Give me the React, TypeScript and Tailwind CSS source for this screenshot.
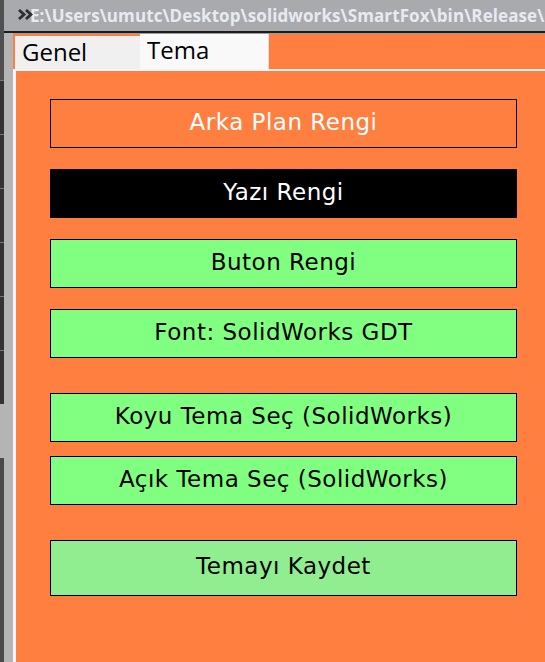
import React from "react";

const btnFont = { fontFamily: '"DejaVu Sans", Verdana, sans-serif' };

function Btn({
  label,
  cls,
}: {
  label: string;
  cls: string;
}) {
  return (
    <div
      className={`w-[467px] ml-[34px] flex items-center justify-center pb-[3px] text-[23px] tracking-[0.5px] ${cls}`}
      style={btnFont}
    >
      {label}
    </div>
  );
}

export default function App() {
  return (
    <div className="w-[545px] h-[662px] overflow-hidden flex bg-[#b4b4b4]">
      {/* left dark strip */}
      <div className="w-[4px] shrink-0 flex flex-col">
        <div className="h-[80px] bg-[#505050]" />
        <div className="h-[54px] border-t border-[#777777] bg-[#333333]" />
        <div className="h-[54px] border-t border-[#777777] bg-[#333333]" />
        <div className="h-[54px] border-t border-[#777777] bg-[#333333]" />
        <div className="h-[54px] border-t border-[#777777] bg-[#333333]" />
        <div className="h-[54px] border-t border-[#777777] bg-[#333333]" />
        <div className="h-[54px] border-t border-[#777777] bg-[#333333]" />
        <div className="h-[54px] bg-[#b4b4b4]" />
        <div className="flex-1 bg-[#4a4a4a]" />
      </div>

      <div className="flex-1 min-w-0 flex flex-col">
        {/* title bar */}
        <div className="h-[31px] shrink-0 bg-[#a9aaae] relative overflow-hidden whitespace-nowrap pl-[26px]">
          <span
            className="block text-[17px] tracking-[0.1px] font-bold leading-[31px] text-[#e7eaf1]"
            style={{ fontFamily: '"Open Sans", "Noto Sans", sans-serif' }}
          >
            E:\Users\umutc\Desktop\solidworks\SmartFox\bin\Release\F
          </span>
          <svg
            className="absolute left-[14px] top-[9px]"
            width="15"
            height="11"
            viewBox="0 0 15 11"
          >
            <polyline
              points="1,1 6,5.5 1,10"
              fill="none"
              stroke="#2e2e2e"
              strokeWidth="2.8"
            />
            <polyline
              points="8,1 13,5.5 8,10"
              fill="none"
              stroke="#2e2e2e"
              strokeWidth="2.8"
            />
          </svg>
        </div>
        <div className="h-[2px] shrink-0 bg-[#1c1c1c]" />

        <div className="flex-1 flex min-h-0">
          <div className="w-[9px] shrink-0 bg-[#b4b4b4]" />
          <div className="flex-1 min-w-0 flex flex-col">
            <div className="h-[1px] shrink-0 bg-[#9c9c9c]" />
            {/* tabs */}
            <div
              className="h-[35px] shrink-0 bg-[#ff7f40] flex items-end pl-[2px]"
              style={{ fontFamily: '"Open Sans", "Noto Sans", sans-serif' }}
            >
              <div className="w-[125px] h-[33px] bg-[#f0f0f0] pl-[7px] text-[24px] leading-[32px] text-black">
                Genel
              </div>
              <div className="w-[129px] h-[35px] bg-[#f9f9f9] border-r border-[#dcdcdc] pl-[7px] text-[24px] leading-[32px] text-black">
                Tema
              </div>
            </div>
            {/* tab page */}
            <div className="flex-1 border-t-2 border-l-[3px] border-[#f4f6f9] bg-[#ff7f40] pt-[28px] flex flex-col">
              <Btn
                label="Arka Plan Rengi"
                cls="h-[49px] border border-black bg-[#ff7f40] text-white"
              />
              <Btn
                label="Yazı Rengi"
                cls="h-[49px] mt-[21px] bg-black text-white"
              />
              <Btn
                label="Buton Rengi"
                cls="h-[49px] mt-[21px] border border-black bg-[#80ff80] text-black"
              />
              <Btn
                label="Font: SolidWorks GDT"
                cls="h-[49px] mt-[21px] border border-black bg-[#80ff80] text-black"
              />
              <Btn
                label="Koyu Tema Seç (SolidWorks)"
                cls="h-[49px] mt-[35px] border border-black bg-[#80ff80] text-black"
              />
              <Btn
                label="Açık Tema Seç (SolidWorks)"
                cls="h-[49px] mt-[14px] border border-black bg-[#80ff80] text-black"
              />
              <Btn
                label="Temayı Kaydet"
                cls="h-[56px] mt-[35px] border border-black bg-[#90ee90] text-black"
              />
            </div>
          </div>
        </div>
      </div>
    </div>
  );
}
